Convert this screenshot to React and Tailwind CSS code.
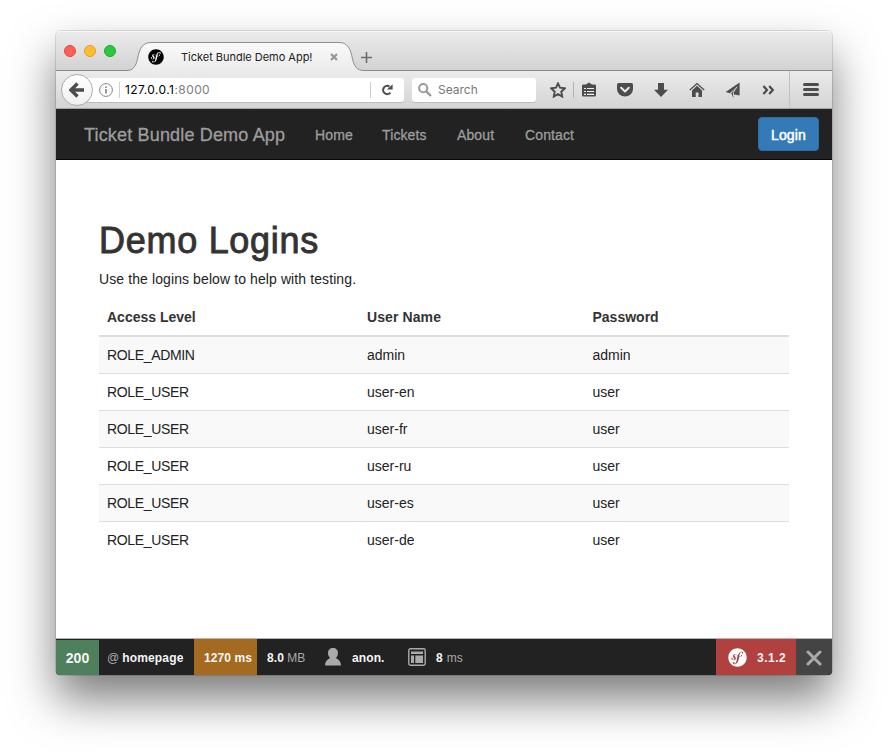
import React from 'react';
import { FaSymfony } from 'react-icons/fa';

const rows = [
  ['ROLE_ADMIN', 'admin', 'admin'],
  ['ROLE_USER', 'user-en', 'user'],
  ['ROLE_USER', 'user-fr', 'user'],
  ['ROLE_USER', 'user-ru', 'user'],
  ['ROLE_USER', 'user-es', 'user'],
  ['ROLE_USER', 'user-de', 'user'],
];

function Icon({ className = '', size = 16, children }) {
  return (
    <svg className={`shrink-0 ${className}`} width={size} height={size} viewBox={`0 0 ${size} ${size}`} fill="none">
      {children}
    </svg>
  );
}

function TitleBar() {
  return (
    <div className="flex h-10 shrink-0 rounded-t-[5px] border-t border-[#f8f8f8] bg-linear-to-b from-[#ebebeb] to-[#d2d2d2] shadow-[inset_0_-1px_0_#8b8b8b]">
      <div className="flex gap-2 pl-2 pt-[13px]">
        <span className="size-3 rounded-full border border-[#e2463f] bg-[#ff5f57]" />
        <span className="size-3 rounded-full border border-[#e0a028] bg-[#ffbd2e]" />
        <span className="size-3 rounded-full border border-[#1aab29] bg-[#28c940]" />
      </div>
      <div className="relative ml-[11px] flex h-[39px] w-[238px] items-center pt-[11px]">
        <svg className="absolute left-0 top-0" width="238" height="40" viewBox="0 0 238 40">
          <defs>
            <linearGradient id="tab" x1="0" y1="0" x2="0" y2="1">
              <stop offset="0" stopColor="#fafafa" />
              <stop offset="1" stopColor="#ebebeb" />
            </linearGradient>
          </defs>
          <path d="M0 40V38.5C6 38.5 9 34 10.5 27C12.5 17 15 10.5 24 10.5H212C221 10.5 223.5 17 225.5 27C227 34 230 38.5 237 38.5V40Z" fill="url(#tab)" />
          <path d="M0 38.5C6 38.5 9 34 10.5 27C12.5 17 15 10.5 24 10.5H212C221 10.5 223.5 17 225.5 27C227 34 230 38.5 237 38.5" fill="none" stroke="#8e8e8e" />
        </svg>
        <FaSymfony className="relative ml-[21px] size-4 text-black" />
        <span className="relative ml-[17px] w-[149px] whitespace-nowrap font-['Inter','Liberation_Sans',sans-serif] text-[11px] leading-4 tracking-[-0.02px] text-[#222]">
          Ticket Bundle Demo App!
        </span>
        <Icon size={8} className="relative">
          <path d="M1 1L7 7M7 1L1 7" stroke="#969696" strokeWidth="2.2" />
        </Icon>
      </div>
      <Icon size={11} className="-ml-[4px] mt-[20px]">
        <path d="M5.5 0V11M0 5.5H11" stroke="#6c6c6c" strokeWidth="1.6" />
      </Icon>
    </div>
  );
}

function Toolbar() {
  return (
    <div className="flex h-[38px] shrink-0 items-center border-b border-[#a5a5a5] bg-linear-to-b from-[#ebebeb] to-[#d4d4d4] pl-[5px] pt-px font-['Inter','Liberation_Sans',sans-serif] text-[12px]">
      <div className="z-10 flex size-8 shrink-0 items-center justify-center rounded-full border border-[#adadad] bg-linear-to-b from-white to-[#f0f0f0]">
        <Icon size={16}>
          <path d="M8.5 1.5L2 8L8.5 14.5M2.5 8H15" stroke="#4c4c4c" strokeWidth="3.4" />
        </Icon>
      </div>
      <div className="-ml-4 flex h-6 w-[327px] shrink-0 items-center rounded-r-[3px] bg-white pl-[22px] shadow-[0_1px_0_#bdbdbd]">
        <Icon size={14}>
          <circle cx="7" cy="7" r="6.4" stroke="#858585" />
          <path d="M7 6V10.5" stroke="#777" strokeWidth="1.5" />
          <path d="M7 3.4V5" stroke="#777" strokeWidth="1.6" />
        </Icon>
        <span className="ml-[6px] h-4 w-px bg-[#cfcfcf]" />
        <span className="ml-[5px] w-[245px] whitespace-nowrap tracking-[0.42px] text-black">
          127.0.0.1<span className="text-[#7d7d7d]">:8000</span>
        </span>
        <span className="h-4 w-px bg-[#cfcfcf]" />
        <Icon size={12} className="ml-[10px]">
          <path d="M8.4 2.5A4.1 4.1 0 1 0 9.4 8.6" stroke="#4c4c4c" strokeWidth="2.1" />
          <path d="M11.6 0.2V5.6H6Z" fill="#4c4c4c" />
        </Icon>
      </div>
      <div className="ml-2 flex h-6 w-[124px] shrink-0 items-center rounded-[3px] bg-white pl-[6px] text-[#777] shadow-[0_1px_0_#bdbdbd]">
        <Icon size={14}>
          <circle cx="5.2" cy="5.2" r="4.1" stroke="#9a9a9a" strokeWidth="2" />
          <path d="M8.3 8.3L13 13" stroke="#9a9a9a" strokeWidth="2.4" />
        </Icon>
        <span className="ml-[6px]">Search</span>
      </div>
      <Icon className="ml-[14px]">
        <path d="M8 1.4L10 5.7L14.8 6.3L11.3 9.7L12.2 14.6L8 12.2L3.8 14.6L4.7 9.7L1.2 6.3L6 5.7Z" stroke="#4c4c4c" strokeWidth="1.9" />
      </Icon>
      <span className="ml-[7px] h-4 w-px bg-[#b3b3b3]" />
      <Icon className="ml-[7px]">
        <path d="M1 3.8Q1 2.5 2.5 2.5H5L8 .4L11 2.5H13.5Q15 2.5 15 3.8V13Q15 14.5 13.5 14.5H2.5Q1 14.5 1 13Z" fill="#4c4c4c" />
        <path d="M3 6.5H5M6 6.5H13M3 9.5H5M6 9.5H13M3 12.3H5M6 12.3H13" stroke="#eee" strokeWidth="1.2" />
      </Icon>
      <Icon className="ml-[20px]">
        <path d="M1.5 1H14.5Q16 1 16 2.5V7A8 7.6 0 0 1 0 7V2.5Q0 1 1.5 1Z" fill="#4c4c4c" />
        <path d="M4.2 5.8L8 9.4L11.8 5.8" stroke="#eaeaea" strokeWidth="2" strokeLinecap="round" strokeLinejoin="round" />
      </Icon>
      <Icon className="ml-[20px]">
        <path d="M5 1H11V7.8H15L8 15L1 7.8H5Z" fill="#4c4c4c" />
      </Icon>
      <Icon className="ml-[20px]">
        <path d="M0.8 8L8 1.6L15.2 8" stroke="#4c4c4c" strokeWidth="1.3" />
        <path d="M8 3.8L13 8.4V15H9.5V10.5H6.7V15H3V8.4Z" fill="#4c4c4c" />
      </Icon>
      <Icon className="ml-[20px]">
        <path d="M14.6 0.6L0.6 10L4.8 11.2L12 4.5L6.2 11.2L8.2 15.5L9 12.4L14.6 13.6Z" fill="#4c4c4c" />
        <path d="M12.2 4.6L8.2 10.6L8.6 14" stroke="#e0e0e0" strokeWidth="0.9" />
      </Icon>
      <Icon className="ml-[20px]">
        <path d="M2.4 4L6 8L2.4 12M8.2 4L11.8 8L8.2 12" stroke="#4c4c4c" strokeWidth="2.2" />
      </Icon>
      <span className="-mt-px ml-[12px] h-[37px] w-px bg-[#c2c2c2]" />
      <Icon className="ml-[13px]">
        <path d="M1.5 2.5H14.5M1.5 7.5H14.5M1.5 12.5H14.5" stroke="#4c4c4c" strokeWidth="3" strokeLinecap="round" />
      </Icon>
    </div>
  );
}

function NavBar() {
  return (
    <nav className="flex h-[51px] shrink-0 items-center border-b border-[#080808] bg-[#222] pl-7 pr-[13px] text-[14px] tracking-[0.12px] text-[#9d9d9d] [-webkit-text-stroke:0.3px_#9d9d9d]">
      <span className="w-[231px] whitespace-nowrap pt-px text-[18px] leading-5 tracking-[0.17px]">Ticket Bundle Demo App</span>
      <a className="w-[67px] pt-[2px]">Home</a>
      <a className="w-[75px] pt-[2px]">Tickets</a>
      <a className="w-[68px] pt-[2px]">About</a>
      <a className="pt-[2px]">Contact</a>
      <button className="ml-auto h-[34px] w-[61px] rounded border border-[#2e6da4] bg-[#337ab7] pt-[2px] text-white [-webkit-text-stroke:0.5px_#fff]">
        Login
      </button>
    </nav>
  );
}

function Page() {
  return (
    <main className="min-h-0 flex-1 bg-white px-[43px] pt-[61px] text-[14px] leading-5 text-[#333]">
      <h1 className="mb-2 text-[36px] leading-10 tracking-[0.72px] [-webkit-text-stroke:0.9px_#333]">Demo Logins</h1>
      <p className="mb-[10px] tracking-[0.1px] text-[#222]">Use the logins below to help with testing.</p>
      <div className="grid h-[38px] grid-cols-[260px_225.5px_1fr] items-center border-b-2 border-[#ddd] font-bold">
        <span className="pl-2">Access Level</span>
        <span className="pl-2 tracking-[0.1px]">User Name</span>
        <span className="pl-2">Password</span>
      </div>
      <div className="divide-y divide-[#ddd]">
        {rows.map(([role, name, password]) => (
          <div key={name} className="grid grid-cols-[260px_225.5px_1fr] py-2 text-[#222] odd:bg-[#f9f9f9]">
            <span className="pl-2 tracking-[-0.35px]">{role}</span>
            <span className="pl-2">{name}</span>
            <span className="pl-2">{password}</span>
          </div>
        ))}
      </div>
    </main>
  );
}

function DebugBar() {
  return (
    <footer className="flex h-[37px] shrink-0 items-center whitespace-nowrap rounded-b-[4px] border-t border-[#b5b5b5] bg-[#222] text-[12px] text-[#aaa] [&_b]:font-bold [&_b]:text-[#f5f5f5]">
      <div className="flex h-full w-[43px] items-center justify-center rounded-bl-[4px] border-t border-[#222] bg-[#4f805d] pt-px text-[14px]"><b>200</b></div>
      <div className="flex w-[95px] items-center gap-[3px] pl-2 pt-[2px]">@ <b className="tracking-[0.17px]">homepage</b></div>
      <div className="flex h-full w-[63px] items-center bg-[#a46a1f] pl-[10px] pt-[2px]"><b className="tracking-[0.1px]">1270 ms</b></div>
      <div className="flex w-[68px] items-center gap-[3px] pl-[10px] pt-[2px]"><b className="tracking-[0.15px]">8.0</b> <span className="tracking-[0.1px]">MB</span></div>
      <svg width="16" height="18" viewBox="0 0 16 18" fill="#aaa">
        <path d="M8 0C11 0 13 2 13 5C13 7.5 12 9 10.8 10C14 11.5 16 14 16 17.5H0C0 14 2 11.5 5.2 10C4 9 3 7.5 3 5C3 2 5 0 8 0Z" />
      </svg>
      <b className="ml-[11px] w-[56px] pt-[2px] tracking-[0.1px]">anon.</b>
      <Icon size={18}>
        <rect x=".8" y=".8" width="16.4" height="16.4" rx="1.6" stroke="#aaa" strokeWidth="1.4" />
        <path d="M3 3.5H15V6H3ZM3 7.5H6V15H3ZM7.3 7.5H15V15H7.3Z" fill="#aaa" />
      </Icon>
      <b className="ml-[10px] mr-1 pt-[2px]">8</b> <span className="pt-[2px]">ms</span>
      <div className="ml-auto flex h-full w-20 items-center bg-[#b0413e] pl-3">
        <FaSymfony className="size-[19px] text-white" />
        <b className="ml-[10px] pt-[2px] tracking-[0.5px]">3.1.2</b>
      </div>
      <div className="flex h-full w-9 items-center justify-center rounded-br-[4px] bg-[#444] pt-[2px]">
        <Icon size={16}>
          <path d="M2 2L14 14M14 2L2 14" stroke="#aaa" strokeWidth="3" strokeLinecap="round" />
        </Icon>
      </div>
    </footer>
  );
}

export default function App() {
  return (
    <div className="h-[755px] w-[888px] overflow-hidden bg-white pl-14 pt-[31px] font-['Liberation_Sans',Arial,sans-serif]">
      <div className="flex h-[644px] w-[776px] flex-col rounded-[5px] shadow-[0_0_0_1px_rgba(0,0,0,0.12),0_24px_46px_rgba(0,0,0,0.52)]">
        <TitleBar />
        <Toolbar />
        <NavBar />
        <Page />
        <DebugBar />
      </div>
    </div>
  );
}
